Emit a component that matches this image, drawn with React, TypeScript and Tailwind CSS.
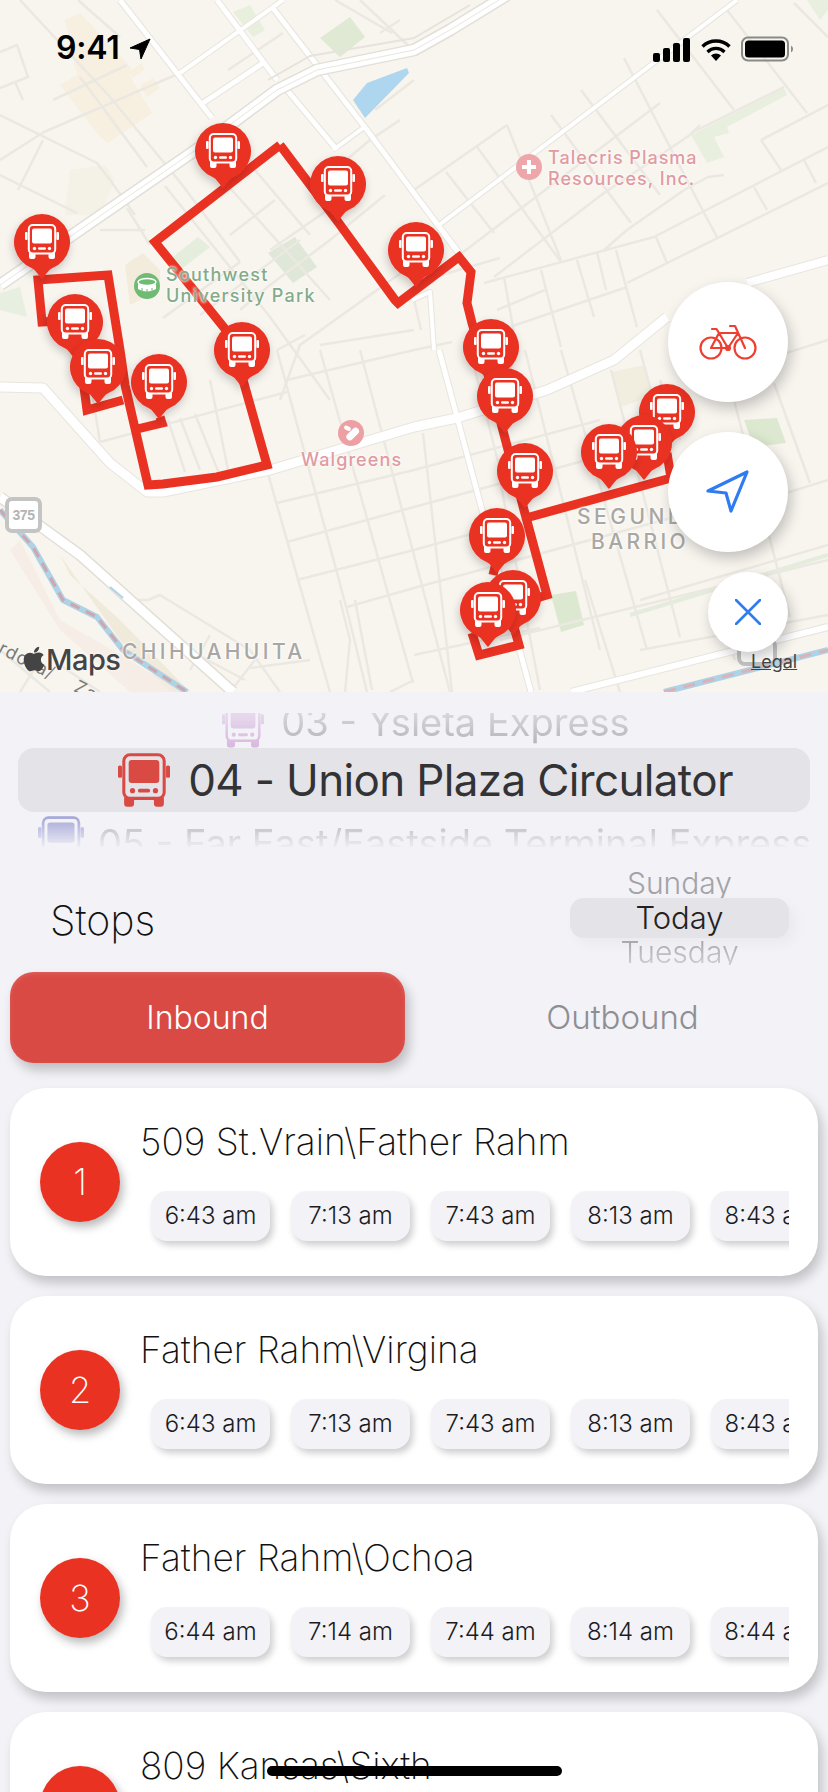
import React from "react";
import { FaApple } from "react-icons/fa";

const minor: string[] = [
  // upper-left
  "0,52 17,45 28,77 0,88", "15,82 23,100", "0,115 97,163 110,180 135,215", "43,140 18,190", "0,175 77,213",
  "20,0 110,97 180,182 240,262", "78,0 120,37", "80,77 147,167", "53,100 127,65", "0,160 44,132 180,73",
  "127,208 150,245", "100,230 145,230", "165,186 270,317 330,400", "205,160 330,300", "255,170 310,235", "275,200 230,235",
  "240,262 163,318", "300,240 200,315", "335,205 270,250", "385,195 330,240 270,285 240,310", "405,270 300,345 280,400",
  "320,345 414,330", "305,335 277,350", "335,0 392,33", "283,33 228,70", "360,0 413,50", "400,20 380,33", "400,120 370,140 340,165", "375,110 414,80",
  // upper-right
  "414,190 507,125", "507,125 561,260", "477,147 561,262", "446,172 494,233", "462,253 660,103", "551,115 631,223", "581,90 660,195", "624,58 704,213 717,237",
  "657,10 734,110", "727,10 807,113", "794,3 828,37", "761,140 828,105", "761,140 781,170", "691,133 784,87", "484,283 654,237 828,147", "627,283 828,183",
  "604,250 627,230 684,190", "494,277 604,193 690,135", "504,277 514,333", "541,270 561,347", "577,260 594,317", "597,252 606,290", "616,250 637,327", "656,237 667,263",
  "754,187 767,210", "804,160 816,183", "472,340 627,287", "684,190 708,177 724,175", "690,135 700,125", "414,283 500,258",
  // lower-middle
  "267,470 330,692", "277,350 347,610 367,692", "320,350 413,683", "360,350 450,692", "100,442 287,392", "180,418 200,470", "195,414 220,476", "168,420 185,472", "210,380 228,470", "90,380 100,442",
  "287,380 414,350", "277,503 414,470", "287,542 414,507", "297,580 414,550", "347,607 414,588", "423,433 452,692",
  "414,350 452,342", "414,470 600,420", "414,507 660,440", "414,550 700,470", "414,588 700,510", "414,655 540,628", "500,640 828,560",
  "525,350 600,650", "561,350 647,650", "611,370 680,637", "470,350 500,470", "500,480 540,690", "585,580 620,692", "734,400 790,617", "774,383 810,483", "640,350 660,425",
  "700,520 828,480", "640,650 828,615", "700,380 828,340", "640,600 828,545", "720,620 735,660", "660,380 680,440",
  "130,600 148,600 160,595 250,650 280,692", "165,625 170,640 245,680", "210,635 190,670", "255,660 230,692", "250,668 310,660", "0,650 50,692", "20,692 40,660", "60,665 100,692", "340,600 350,640 345,692",
  "355,600 372,690", "390,692 414,680", "414,300 421,330", "497,310 545,290",
];

const major: [string, number][] = [
  ["120,0 212,118", 5], ["217,0 277,80", 5], ["287,90 337,150", 5], ["272,7 367,130 460,255", 5], ["180,73 283,0", 4], ["203,103 263,63", 5], ["333,150 363,128", 4],
  ["439,225 737,0", 4], ["414,193 460,253", 4], ["412,300 430,292 434,350", 4], ["439,350 531,692", 5],
  ["0,387 43,388 110,463 147,492 163,492 270,470 414,427 457,418 547,390 614,360 667,317", 9],
  ["747,283 828,260", 8], ["571,692 828,627", 6],
];

const pins: [number, number][] = [
  [223, 151], [338, 184], [42, 242], [416, 250], [75, 322], [98, 367], [159, 382], [242, 350], [491, 347], [505, 396], [525, 471], [497, 536], [513, 598], [488, 610], [667, 412], [644, 443], [609, 452],
];

const route = [
  "280,145 155,242 242,350 243,380 267,465 217,477 163,484 148,485 125,385 120,350 108,275 38,280 42,322 75,320 87,410 123,400",
  "133,430 162,423 160,417",
  "280,145 338,222 395,300 398,303 459,257 471,272 467,303 472,323 491,384 502,427 524,510 547,595 530,600",
  "526,518 671,478 667,453",
  "514,627 519,645 479,655 472,633",
  "496,563 493,575",
];

function BusGlyph() {
  return (
    <g>
      <rect x="3.8" y="1" width="26.4" height="28.5" rx="4" fill="none" stroke="currentColor" strokeWidth="2" />
      <rect x="7" y="4.5" width="20" height="15" rx="2" fill="currentColor" />
      <circle cx="9.5" cy="24.5" r="1.7" fill="currentColor" />
      <circle cx="24.5" cy="24.5" r="1.7" fill="currentColor" />
      <rect x="13" y="23.3" width="8" height="2.4" rx="1.2" fill="currentColor" />
      <path d="M4 29h6.5v4a2 2 0 0 1-2 2H6a2 2 0 0 1-2-2zM23.5 29H30v4a2 2 0 0 1-2 2h-2.500a2 2 0 0 1-2-2z" fill="currentColor" />
      <rect x="0" y="8" width="2.600" height="8" rx="1" fill="currentColor" />
      <rect x="31.400" y="8" width="2.600" height="8" rx="1" fill="currentColor" />
    </g>
  );
}

function BusIcon({ className }: { className: string }) {
  return (
    <svg viewBox="0 0 34 35" className={className}>
      <BusGlyph />
    </svg>
  );
}

function MapDrawing() {
  return (
    <svg viewBox="0 0 828 692" className="absolute inset-0 w-[828px] h-[692px]">
      <defs>
        <filter id="pinshadow" x="-40%" y="-40%" width="180%" height="180%">
          <feDropShadow dx="-1" dy="4" stdDeviation="4" floodColor="#000" floodOpacity="0.2" />
        </filter>
      </defs>
      {/* land use */}
      <polygon points="65,20 80,13 133,70 128,73 152,113 108,143 100,137 60,85 77,75" fill="#f7f0e1" />
      <polygon points="128,72 142,63 145,70 132,78" fill="#f7f0e1" />
      <polygon points="140,85 153,78 160,88 147,97" fill="#f7f0e1" />
      <polygon points="320,38 350,17 365,37 340,57" fill="#dfe9d3" />
      <polygon points="233,12 250,5 265,30 253,37" fill="#e8efdd" />
      <polygon points="173,257 198,237 210,247 180,270" fill="#e5eddc" />
      <polygon points="268,253 295,237 317,267 293,283" fill="#dfe8d8" />
      <polygon points="125,265 143,253 160,270 160,290 130,305" fill="#f3ecdc" />
      <polygon points="0,293 20,287 27,317 0,310" fill="#e7efe0" />
      <polygon points="353,100 367,83 407,68 409,73 365,118" fill="#aed6ee" />
      <polygon points="691,135 784,88 787,95 727,127 729,133 714,137 724,157 707,163" fill="#e8efdf" />
      <polygon points="807,0 828,0 828,10 820,20" fill="#e8efdf" />
      <polygon points="744,420 777,418 786,443 754,447" fill="#dce8cf" />
      <polygon points="551,595 576,591 584,625 561,632" fill="#dce8cf" />
      <polygon points="611,372 645,365 654,395 621,407" fill="#f1eee0" />
      <polygon points="70,170 105,165 115,180 100,215 65,215" fill="#f4f1e6" />
      <polygon points="60,555 120,640 170,692 190,692 120,620 70,575" fill="#f0eadb" />
      <polygon points="20,540 60,620 130,660 180,692 130,692 60,630 10,550" fill="#f5e9e3" opacity="0.7" />
      <polyline points="630,615 828,555" fill="none" stroke="#e4ecdc" strokeWidth="4" />

      {/* streets */}
      {minor.map((p, i) => (
        <polyline key={i} points={p} fill="none" stroke="#ebe8e2" strokeWidth="2.500" strokeLinejoin="round" />
      ))}
      {major.map(([p, w], i) => (
        <polyline key={i} points={p} fill="none" stroke="#e8e5df" strokeWidth={w + 2} strokeLinejoin="round" />
      ))}
      {major.map(([p, w], i) => (
        <polyline key={i} points={p} fill="none" stroke="#ffffff" strokeWidth={w} strokeLinejoin="round" />
      ))}
      {/* freeways */}
      <polyline points="0,285 200,147 277,90 317,70 414,50 450,30 507,-5" fill="none" stroke="#e2dfd9" strokeWidth="13" strokeLinejoin="round" />
      <polyline points="0,285 200,147 277,90 317,70 414,50 450,30 507,-5" fill="none" stroke="#ffffff" strokeWidth="10" strokeLinejoin="round" />
      <polyline points="0,285 200,147 277,90 317,70 414,50 450,30 507,-5" fill="none" stroke="#e9e6e0" strokeWidth="1" />
      <polyline points="268,80 310,56 414,38 470,5" fill="none" stroke="#e6e3dd" strokeWidth="2" />
      <polyline points="0,497 80,555 233,692" fill="none" stroke="#e2dfd9" strokeWidth="12" />
      <polyline points="0,497 80,555 233,692" fill="none" stroke="#ffffff" strokeWidth="9" />
      <polyline points="0,510 33,547 63,600 97,617 123,650 187,692" fill="none" stroke="#afd3e6" strokeWidth="6" strokeLinejoin="round" />
      <polyline points="0,510 33,547 63,600 97,617 123,650 187,692" fill="none" stroke="#cfa6ad" strokeWidth="3" strokeDasharray="10 7" />
      <polyline points="664,692 828,650" fill="none" stroke="#afd3e6" strokeWidth="6" />
      <polyline points="664,692 828,650" fill="none" stroke="#d9b3b6" strokeWidth="3" strokeDasharray="12 8" />
      <line x1="110" y1="587" x2="123" y2="598" stroke="#afd3e6" strokeWidth="2" />

      {/* shields */}
      <path d="M690 300q6-6 10-3 6-5 10-1 6-4 10 0l8 30h-36z" fill="#fff" stroke="#c8c8c8" strokeWidth="2" />
      <rect x="739" y="640" width="36" height="24" rx="6" fill="#fff" stroke="#c4c4c4" strokeWidth="4" />

      {/* route */}
      {route.map((p, i) => (
        <polyline key={i} points={p} fill="none" stroke="#ea3223" strokeWidth="9" strokeLinejoin="miter" />
      ))}

      {/* pins */}
      {pins.map(([x, y], i) => (
        <g key={i} transform={`translate(${x} ${y})`} filter="url(#pinshadow)">
          <path d="M-11 25.800A28 28 0 1 1 11 25.800C6 28 4 33 0 37C-4 33-6 28-11 25.800Z" fill="#ea3223" />
          <g transform="translate(-17 -18)" className="text-white">
            <BusGlyph />
          </g>
        </g>
      ))}

      {/* poi marks */}
      <circle cx="529" cy="167" r="13" fill="#eda7ab" />
      <path d="M522 167h14M529 160v14" stroke="#fff" strokeWidth="4" />
      <circle cx="351" cy="433" r="13" fill="#eda0a4" />
      <rect x="345" y="431" width="15" height="7" rx="3.500" transform="rotate(-45 352 434)" fill="#fff" />
      <rect x="344" y="426" width="7" height="4" rx="2" transform="rotate(25 347 428)" fill="#fff" />
      <circle cx="147" cy="286" r="13" fill="#6fbb73" />
      <ellipse cx="147" cy="282" rx="9" ry="3.500" fill="none" stroke="#fff" strokeWidth="1.500" />
      <path d="M138 284v5q9 5 18 0v-5q-9 4-18 0z" fill="#fff" />
      <path d="M142 288v3M147 289v3M152 288v3" stroke="#6fbb73" strokeWidth="1" />
    </svg>
  );
}

function StatusBar() {
  return (
    <div className="absolute left-0 top-0 w-full h-[80px] text-black">
      <span className="absolute left-[56px] top-[28px] text-[32px] leading-[40px] font-semibold tracking-[-0.2px]">9:41</span>
      <svg viewBox="0 0 22 22" className="absolute left-[129px] top-[38px] w-[22px] h-[22px]">
        <path d="M21 1 L1 10 L10.500 11.500 L12 21 Z" fill="#000" stroke="#000" strokeWidth="1" strokeLinejoin="round" />
      </svg>
      <svg viewBox="0 0 38 24" className="absolute left-[653px] top-[38px] w-[38px] h-[24px]">
        <rect x="0" y="15" width="7" height="9" rx="2" />
        <rect x="10" y="10" width="7" height="14" rx="2" />
        <rect x="20" y="5" width="7" height="19" rx="2" />
        <rect x="30" y="0" width="7" height="24" rx="2" />
      </svg>
      <svg viewBox="0 0 32 24" className="absolute left-[700px] top-[37px] w-[32px] h-[24px]">
        <path d="M16 24l-5-5.500a7 7 0 0 1 10 0z" />
        <path d="M7.500 15a12 12 0 0 1 17 0" fill="none" stroke="#000" strokeWidth="3.200" />
        <path d="M2.500 9.500a19.500 19.500 0 0 1 27 0" fill="none" stroke="#000" strokeWidth="3.400" />
      </svg>
      <svg viewBox="0 0 54 26" className="absolute left-[741px] top-[36px] w-[54px] h-[26px]">
        <rect x="1" y="1.500" width="46" height="23" rx="6" fill="none" stroke="#8a8a86" strokeWidth="2" />
        <rect x="4" y="4.500" width="40" height="17" rx="3.500" fill="#000" />
        <path d="M50 9.500a4 4 0 0 1 0 7z" fill="#8a8a86" />
      </svg>
    </div>
  );
}

const labelGreen = "absolute font-medium text-[#83ab89] [text-shadow:0_0_3px_#fff,0_0_3px_#fff]";
const labelPink = "absolute font-medium text-[#e19aa0] [text-shadow:0_0_3px_#fff,0_0_3px_#fff]";
const labelGrey = "absolute font-medium text-[#a8a7a3] [text-shadow:0_0_3px_#fff,0_0_3px_#fff]";

function MapLabels() {
  return (
    <>
      <div className={`${labelGreen} left-[166px] top-[264px] text-[18px] leading-[21px] tracking-[1.250px] whitespace-pre`}>{"Southwest\nUniversity Park"}</div>
      <div className={`${labelPink} left-[548px] top-[147px] text-[18px] leading-[21px] tracking-[1px] whitespace-pre`}>{"Talecris Plasma\nResources, Inc."}</div>
      <div className={`${labelPink} left-[301px] top-[449px] text-[18px] leading-[22px] tracking-[1.100px] text-[#d98f95]`}>Walgreens</div>
      <div className={`${labelGrey} left-[122px] top-[639px] text-[21px] leading-[25px] tracking-[3.400px]`}>CHIHUAHUITA</div>
      <div className={`${labelGrey} left-[577px] top-[504px] text-[21px] leading-[25px] tracking-[3.500px] text-center`}>SEGUNDO</div>
      <div className={`${labelGrey} left-[591px] top-[529px] text-[21px] leading-[25px] tracking-[3.400px]`}>BARRIO</div>
      <div className="absolute left-[5px] top-[497px] w-[37px] h-[36px] rounded-[7px] border-4 border-[#c4c4c4] bg-white flex items-center justify-center text-[#b4b4b4] font-bold text-[14px] tracking-[-0.5px] font-['Liberation_Sans',sans-serif]">375</div>
      <div className="absolute left-[0px] top-[636px] text-[18px] leading-[22px] text-[#7b7b78] rotate-[27deg] origin-left tracking-[1px] whitespace-pre">{"rdova/    Zagara"}</div>
      <div className="absolute left-[22px] top-[642px] flex items-center text-[#444] [text-shadow:0_0_3px_#fff]">
        <FaApple className="w-[24px] h-[28px] -mt-[3px]" />
        <span className="text-[29px] leading-[36px] font-medium tracking-[-0.5px]">Maps</span>
      </div>
      <div className="absolute left-[751px] top-[651px] text-[18px] leading-[22px] text-[#444] underline">Legal</div>
    </>
  );
}

const fab = "absolute rounded-full bg-white shadow-[3px_6px_14px_rgba(0,0,0,0.22)] flex items-center justify-center";

function MapButtons() {
  return (
    <>
      <div className={`${fab} left-[668px] top-[282px] w-[120px] h-[120px]`}>
        <svg viewBox="0 0 58 36" className="w-[58px] h-[36px]" fill="none" stroke="#ee3f30" strokeWidth="2.200" strokeLinecap="round" strokeLinejoin="round">
          <circle cx="12" cy="24" r="10.500" />
          <circle cx="46" cy="24" r="10.500" />
          <path d="M12 24L20 9H39L29 24H12zM20 9L17.500 5H13M29 24L20 9M46 24L36 2H31M39 9H36" />
          <circle cx="29" cy="24" r="2" fill="#ee3f30" />
        </svg>
      </div>
      <div className={`${fab} left-[668px] top-[432px] w-[120px] h-[120px]`}>
        <svg viewBox="0 0 44 44" className="w-[44px] h-[44px]" fill="none" stroke="#2f7bf0" strokeWidth="3.200" strokeLinejoin="round">
          <path d="M2 21L41 2L25 41L20 23Z" />
        </svg>
      </div>
      <div className={`${fab} left-[708px] top-[572px] w-[80px] h-[80px]`}>
        <svg viewBox="0 0 26 26" className="w-[26px] h-[26px]" fill="none" stroke="#2f7bf0" strokeWidth="2.600" strokeLinecap="round">
          <path d="M1 1L25 25M25 1L1 25" />
        </svg>
      </div>
    </>
  );
}

function RoutePicker() {
  return (
    <div className="pt-[21px]">
      <div className="h-[35px] overflow-hidden flex items-end justify-center gap-[17px] pl-[24px] [mask-image:linear-gradient(to_bottom,rgba(0,0,0,0.3),rgba(0,0,0,0.75))]">
        <BusIcon className="w-[42px] h-[46px] text-[#cfa3d6] shrink-0 -mb-[1px]" />
        <span className="text-[38px] leading-[44px] text-[#9a9a9e] whitespace-nowrap mb-[4px]">03 - Ysleta Express</span>
      </div>
      <div className="mx-[18px] h-[64px] rounded-[16px] bg-[#e3e3e8] flex items-center justify-center gap-[18px] pl-[23px]">
        <BusIcon className="w-[52px] h-[54px] text-[#d94a45] shrink-0" />
        <span className="text-[44px] leading-[64px] tracking-[-0.65px] text-[#333336] whitespace-nowrap">04 - Union Plaza Circulator</span>
      </div>
      <div className="h-[35px] overflow-hidden pt-[8px] flex items-start gap-[14px] pl-[38px] [mask-image:linear-gradient(to_bottom,rgba(0,0,0,0.85),rgba(0,0,0,0.05))]">
        <BusIcon className="w-[46px] h-[48px] text-[#8a8dcc] shrink-0 -mt-[4px]" />
        <span className="text-[38px] leading-[46px] text-[#9a9a9e] whitespace-nowrap">05 - Far East/Eastside Terminal Express</span>
      </div>
    </div>
  );
}

function Title() {
  return (
    <div className="mt-[21px] h-[97px] flex justify-between items-center pl-[50px] pr-[39px]">
      <span className="text-[41px] leading-[48px] font-extralight text-[#111] mt-[6px]">Stops</span>
      <div className="w-[219px] flex flex-col items-center">
        <div className="h-[30px] overflow-hidden flex items-end">
          <span className="text-[30px] leading-[36px] font-light text-[#a3a3a8] -mb-[3px]">Sunday</span>
        </div>
        <div className="w-full h-[40px] rounded-[14px] bg-[#e3e3e8] flex items-center justify-center text-[31px] font-light text-[#222] shadow-[6px_6px_14px_rgba(0,0,0,0.04)]">Today</div>
        <div className="h-[27px] overflow-hidden [mask-image:linear-gradient(to_bottom,#000,rgba(0,0,0,0.45))]">
          <span className="block text-[30px] leading-[28px] font-light text-[#a3a3a8]">Tuesday</span>
        </div>
      </div>
    </div>
  );
}

function Tabs() {
  return (
    <div className="mt-[7px] mx-[10px] flex h-[91px]">
      <div className="w-[395px] rounded-[24px] bg-[#d94a45] shadow-[inset_0_2px_4px_rgba(255,255,255,0.12),4px_7px_12px_rgba(0,0,0,0.22)] flex items-center justify-center text-white text-[32px] font-light">Inbound</div>
      <div className="flex-1 pl-[22px] flex items-center justify-center text-[#8e8e93] text-[33px] font-light">Outbound</div>
    </div>
  );
}

const stops: { n: number; name: string; times: string[] }[] = [
  { n: 1, name: "509 St.Vrain\\Father Rahm", times: ["6:43 am", "7:13 am", "7:43 am", "8:13 am", "8:43 am"] },
  { n: 2, name: "Father Rahm\\Virgina", times: ["6:43 am", "7:13 am", "7:43 am", "8:13 am", "8:43 am"] },
  { n: 3, name: "Father Rahm\\Ochoa", times: ["6:44 am", "7:14 am", "7:44 am", "8:14 am", "8:44 am"] },
  { n: 4, name: "809 Kansas\\Sixth", times: ["6:45 am", "7:15 am", "7:45 am", "8:15 am", "8:45 am"] },
];

function StopCard({ n, name, times }: { n: number; name: string; times: string[] }) {
  return (
    <div className="h-[188px] shrink-0 rounded-[36px] bg-white shadow-[4px_7px_12px_rgba(0,0,0,0.2)] flex items-center pl-[30px]">
      <div className="w-[80px] h-[80px] shrink-0 rounded-full bg-[#ea3223] text-white text-[36px] font-extralight flex items-center justify-center shadow-[3px_5px_10px_rgba(0,0,0,0.28)]">{n}</div>
      <div className="ml-[20px] w-[649px] self-start pt-[32px]">
        <div className="text-[37px] leading-[44px] font-extralight text-[#111] whitespace-nowrap">{name}</div>
        <div className="mt-[27px] pl-[11px] pb-[14px] flex gap-[21px] overflow-hidden">
          {times.map((t, i) => (
            <div key={i} className="w-[119px] h-[50px] shrink-0 rounded-[16px] bg-[#f2f2f7] shadow-[3px_4px_7px_rgba(0,0,0,0.2)] flex items-center justify-center text-[24px] font-light text-[#1c1c1e] whitespace-nowrap">{t}</div>
          ))}
        </div>
      </div>
    </div>
  );
}

export default function App() {
  return (
    <div className="relative w-[828px] h-[1792px] overflow-hidden bg-[#f2f2f7] font-['Inter',sans-serif]">
      <div className="relative h-[692px] overflow-hidden bg-[#f8f5ef]">
        <MapDrawing />
        <MapLabels />
        <MapButtons />
        <StatusBar />
      </div>
      <RoutePicker />
      <Title />
      <Tabs />
      <div className="mt-[25px] px-[10px] flex flex-col gap-[20px]">
        {stops.map((s) => (
          <StopCard key={s.n} {...s} />
        ))}
      </div>
      <div className="absolute left-[267px] top-[1766px] w-[295px] h-[10px] rounded-full bg-black" />
    </div>
  );
}
